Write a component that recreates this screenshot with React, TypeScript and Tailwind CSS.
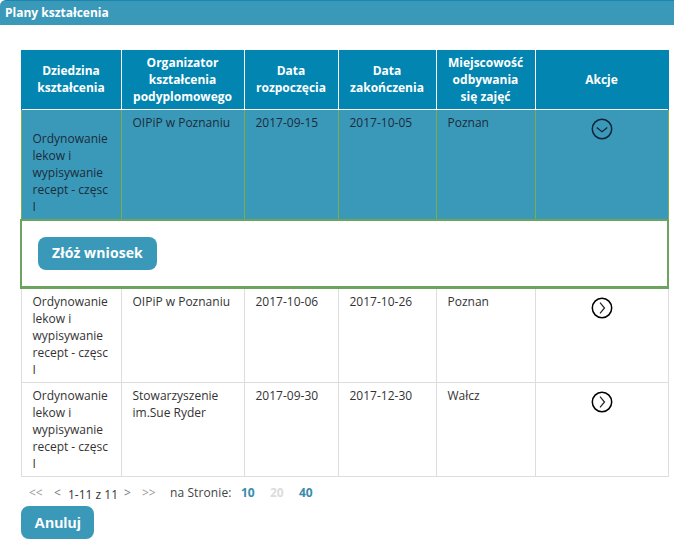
const course = ["Ordynowanie", "lekow i", "wypisywanie", "recept - częsc", "I"];

type Row = { org: string[]; start: string; end: string; place: string };

const rows: Row[] = [
  { org: ["OIPiP w Poznaniu"], start: "2017-10-06", end: "2017-10-26", place: "Poznan" },
  { org: ["Stowarzyszenie", "im.Sue Ryder"], start: "2017-09-30", end: "2017-12-30", place: "Wałcz" },
];

function Lines({ items }: { items: string[] }) {
  return (
    <>
      {items.map((line) => (
        <div key={line} className="whitespace-nowrap">
          {line}
        </div>
      ))}
    </>
  );
}

function Arrow({ open }: { open?: boolean }) {
  return (
    <svg width="22" height="22" viewBox="0 0 22 22" fill="none" className="mx-auto block">
      <circle cx="11" cy="11" r="9.7" stroke={open ? "#0f2438" : "#000"} strokeWidth="1.5" />
      <path
        d={open ? "M5.7 9.5 L11 13.7 L16.3 9.5" : "M9 5.7 L13.5 11 L9 16.3"}
        stroke={open ? "#0f2438" : "#222"}
        strokeWidth="1.2"
      />
    </svg>
  );
}

const head = "border-x border-white bg-[#0285b0] px-2 text-center align-middle font-bold text-white first:border-l-[#0285b0] last:border-r-[#0285b0]";
const sel = "border-x border-[#7dab4d] bg-[#3a99b9] px-[11px] pt-1 align-top text-[#1c2b3c]";
const cell = "border border-[#dddddd] px-[11px] pt-1 pb-1 align-top text-[#333333]";

export default function App() {
  return (
    <div className="h-[544px] w-[674px] overflow-hidden bg-white font-['Open_Sans',sans-serif] text-[12px] leading-[17px]">
      <div className="flex h-[25px] items-center rounded-tl-[6px] border-t border-[#1a85ad] bg-[#3a99b9] pb-px pl-[5px] font-bold text-white">
        Plany kształcenia
      </div>

      <div className="pt-[25px] pl-[20px]">
        <table className="w-[647px] table-fixed border-collapse">
          <colgroup>
            <col className="w-[100px]" />
            <col className="w-[123px]" />
            <col className="w-[94px]" />
            <col className="w-[98px]" />
            <col className="w-[99px]" />
            <col className="w-[133px]" />
          </colgroup>
          <thead>
            <tr className="h-[59px]">
              <th className={head}>Dziedzina<br />kształcenia</th>
              <th className={head}>Organizator<br />kształcenia<br />podyplomowego</th>
              <th className={head}>Data<br />rozpoczęcia</th>
              <th className={head}>Data<br />zakończenia</th>
              <th className={head}>Miejscowość<br />odbywania<br />się zajęć</th>
              <th className={head}>Akcje</th>
            </tr>
          </thead>
          <tbody>
            <tr className="h-[111px] border-t border-white">
              <td className={`${sel} !align-bottom !pb-1`}><Lines items={course} /></td>
              <td className={sel}>OIPiP w Poznaniu</td>
              <td className={sel}>2017-09-15</td>
              <td className={sel}>2017-10-05</td>
              <td className={sel}>Poznan</td>
              <td className={sel}><div className="mt-[4px]"><Arrow open /></div></td>
            </tr>
            <tr className="h-[67px]">
              <td colSpan={6} className="border-x-2 border-t-2 border-b-[3px] border-[#6ba35f] bg-white p-0 pl-[16px] align-middle">
                <button
                  type="button"
                  className="flex h-[33px] w-[119px] items-center justify-center rounded-[8px] bg-[#3a99b9] pb-[2px] text-[14px] font-bold tracking-[0.1px] text-white"
                >
                  Złóż wniosek
                </button>
              </td>
            </tr>
            {rows.map((r) => (
              <tr key={r.start} className="h-[94px]">
                <td className={cell}><Lines items={course} /></td>
                <td className={cell}><Lines items={r.org} /></td>
                <td className={cell}>{r.start}</td>
                <td className={cell}>{r.end}</td>
                <td className={cell}>{r.place}</td>
                <td className={cell}><div className="mt-[4px]"><Arrow /></div></td>
              </tr>
            ))}
          </tbody>
        </table>

        <div className="mt-[6px] flex h-[20px] items-center pl-[9px] text-[#444444]">
          <span className="w-[25px] text-[#999999]">&lt;&lt;</span>
          <span className="w-[14px] text-[#777777]">&lt;</span>
          <span className="mt-[3px] w-[56px] text-[#333333]">1-11 z 11</span>
          <span className="w-[18px] text-[#777777]">&gt;</span>
          <span className="w-[28px] text-[#999999]">&gt;&gt;</span>
          <span className="w-[71px] tracking-[0.1px]">na Stronie:</span>
          <span className="w-[29px] font-bold text-[#3a8cab]">10</span>
          <span className="w-[29px] font-bold text-[#dcdcdc]">20</span>
          <span className="font-bold text-[#3a8cab]">40</span>
        </div>

        <button
          type="button"
          className="mt-[3px] ml-px flex h-[33px] w-[73px] items-center justify-center rounded-[8px] bg-[#3a99b9] font-['Liberation_Sans',sans-serif] text-[15px] font-bold text-white"
        >
          Anuluj
        </button>
      </div>
    </div>
  );
}
